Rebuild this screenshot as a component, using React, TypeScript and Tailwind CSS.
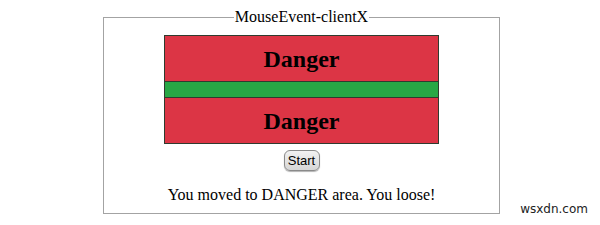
export default function App() {
  return (
    <div className="relative h-[225px] w-[600px] bg-white pt-[8px] font-['Liberation_Serif',serif] text-black">
      <fieldset className="ml-[103px] w-[397px] border border-[#a3a3a3] px-0 pb-[8px]">
        <legend className="mx-auto px-[1px] text-[16px] leading-[18px]">MouseEvent-clientX</legend>
        <div className="mx-auto mt-[9px] w-[275px] border border-[#2f3b2f]">
          <div className="flex h-[45px] items-center justify-center bg-[#dc3545] text-[24px] font-bold">
            Danger
          </div>
          <div className="h-[17px] border-y border-[#2f3b2f] bg-[#28a745]" />
          <div className="flex h-[45px] items-center justify-center bg-[#dc3545] text-[24px] font-bold">
            Danger
          </div>
        </div>
        <div className="mt-[6px] flex justify-center">
          <button
            type="button"
            className="h-[21px] w-[36px] rounded-[6px] border border-[#8a8a8a] bg-gradient-to-b from-[#f2f2f2] to-[#d6d6d6] font-['Liberation_Sans',sans-serif] text-[13px] leading-none shadow-[0_1px_1px_rgba(0,0,0,0.3)]"
          >
            Start
          </button>
        </div>
        <p className="mt-[14px] text-center text-[16px] leading-[20px]">You moved to DANGER area. You loose!</p>
      </fieldset>
      <span className="absolute right-[12px] bottom-[10px] font-['DejaVu_Sans',sans-serif] text-[12px] leading-none text-[#222]">
        wsxdn.com
      </span>
    </div>
  )
}
